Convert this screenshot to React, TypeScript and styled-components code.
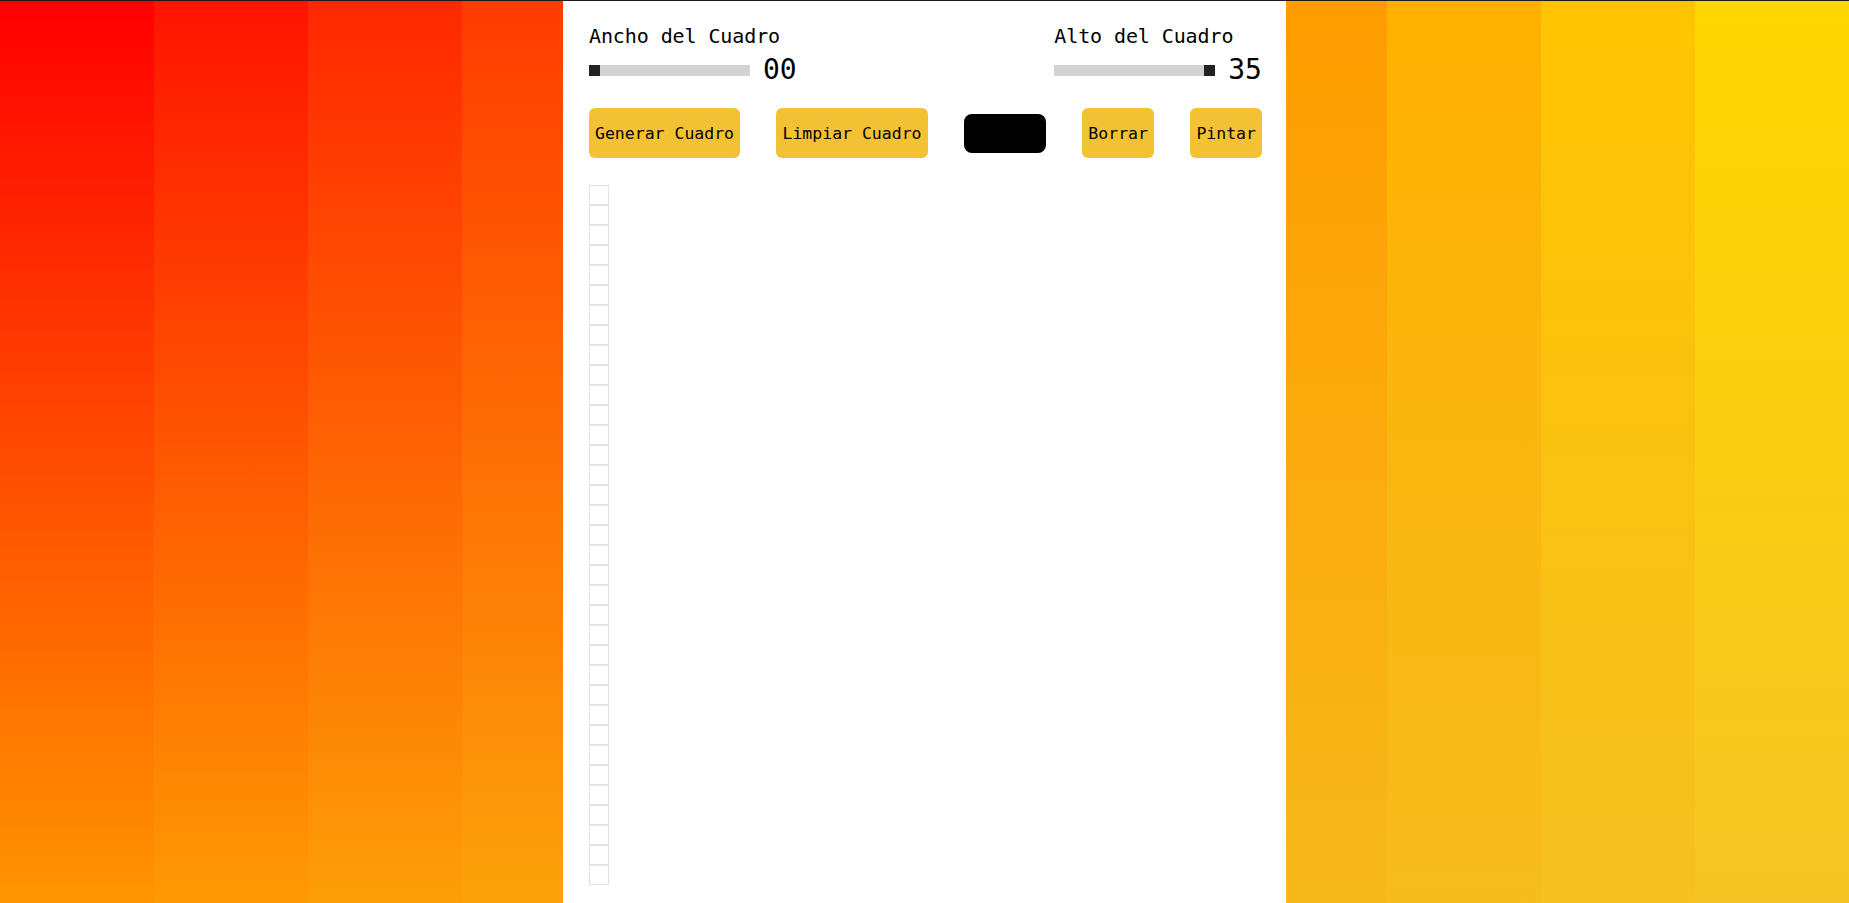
import React from "react";
import styled, { createGlobalStyle } from "styled-components";

const GlobalStyle = createGlobalStyle`
  html, body {
    margin: 0;
    padding: 0;
    overflow: hidden;
  }

  body {
    font-family: "DejaVu Sans Mono", "Liberation Mono", monospace;
    color: #000;
  }
`;

const STRIPES = 12;
const COLS = 0;
const ROWS = 35;

const lerp = (a: number, b: number, t: number) => a + (b - a) * t;

const stripeGradient = (i: number) => {
  const t = i / (STRIPES - 1);
  const top = `hsl(${i * 4.6}, 100%, 50%)`;
  const bottom = `hsl(${lerp(35, 46, t)}, ${lerp(100, 91, t)}%, ${lerp(50, 55, t)}%)`;
  return `linear-gradient(to bottom, ${top}, ${bottom})`;
};

const Page = styled.div`
  display: grid;
  grid-template-columns: repeat(${STRIPES}, 1fr);
  grid-template-rows: 902px;
  border-top: 1px solid #1b1b1b;
`;

const Stripe = styled.div<{ $col: number }>`
  grid-column: ${(p) => p.$col + 1};
  grid-row: 1;
`;

const Panel = styled.main`
  grid-column: 1 / -1;
  grid-row: 1;
  justify-self: center;
  z-index: 1;
  width: 723px;
  box-sizing: border-box;
  padding: 23px 24px 0 26px;
  background: #fff;
  overflow: hidden;
`;

const Controls = styled.div`
  display: flex;
  justify-content: space-between;
`;

const SizeControl = styled.div`
  display: flex;
  flex-direction: column;
  gap: 5px;
`;

const Label = styled.label`
  font-size: 20px;
  line-height: 24px;
  letter-spacing: -0.1px;
`;

const SliderRow = styled.div`
  display: flex;
  align-items: center;
  gap: 13px;
`;

const Track = styled.div<{ $end: boolean }>`
  display: flex;
  justify-content: ${(p) => (p.$end ? "flex-end" : "flex-start")};
  width: 161px;
  height: 11px;
  background: #d3d3d3;
`;

const Thumb = styled.div`
  width: 11px;
  height: 11px;
  background: #222;
`;

const Value = styled.span`
  font-size: 28px;
  line-height: 34px;
`;

const Toolbar = styled.div`
  display: flex;
  justify-content: space-between;
  align-items: center;
  margin-top: 21px;
`;

const Button = styled.button`
  height: 50px;
  padding: 0 6px;
  border: none;
  border-radius: 6px;
  background: #f3c234;
  font-family: inherit;
  font-size: 16.5px;
  color: #000;
  cursor: pointer;
`;

const ColorSwatch = styled.div`
  width: 82px;
  height: 39px;
  border-radius: 8px;
  background: #000;
`;

const Board = styled.div<{ $cols: number }>`
  display: grid;
  grid-template-columns: repeat(${(p) => Math.max(p.$cols, 1)}, 20px);
  margin-top: 27px;
`;

const Cell = styled.div`
  width: 20px;
  height: 20px;
  box-sizing: border-box;
  border: 1px solid #e2e2e2;
`;

const SizeSlider: React.FC<{ label: string; value: number; max: number }> = ({ label, value, max }) => (
  <SizeControl>
    <Label>{label}</Label>
    <SliderRow>
      <Track $end={value >= max}>
        <Thumb />
      </Track>
      <Value>{String(value).padStart(2, "0")}</Value>
    </SliderRow>
  </SizeControl>
);

export default function App() {
  const cells = Array.from({ length: Math.max(COLS, 1) * ROWS });

  return (
    <>
      <GlobalStyle />
      <Page>
        {Array.from({ length: STRIPES }).map((_, i) => (
          <Stripe key={i} $col={i} style={{ background: stripeGradient(i) }} />
        ))}
        <Panel>
          <Controls>
            <SizeSlider label="Ancho del Cuadro" value={COLS} max={35} />
            <SizeSlider label="Alto del Cuadro" value={ROWS} max={35} />
          </Controls>
          <Toolbar>
            <Button>Generar Cuadro</Button>
            <Button>Limpiar Cuadro</Button>
            <ColorSwatch />
            <Button>Borrar</Button>
            <Button>Pintar</Button>
          </Toolbar>
          <Board $cols={COLS}>
            {cells.map((_, i) => (
              <Cell key={i} />
            ))}
          </Board>
        </Panel>
      </Page>
    </>
  );
}
